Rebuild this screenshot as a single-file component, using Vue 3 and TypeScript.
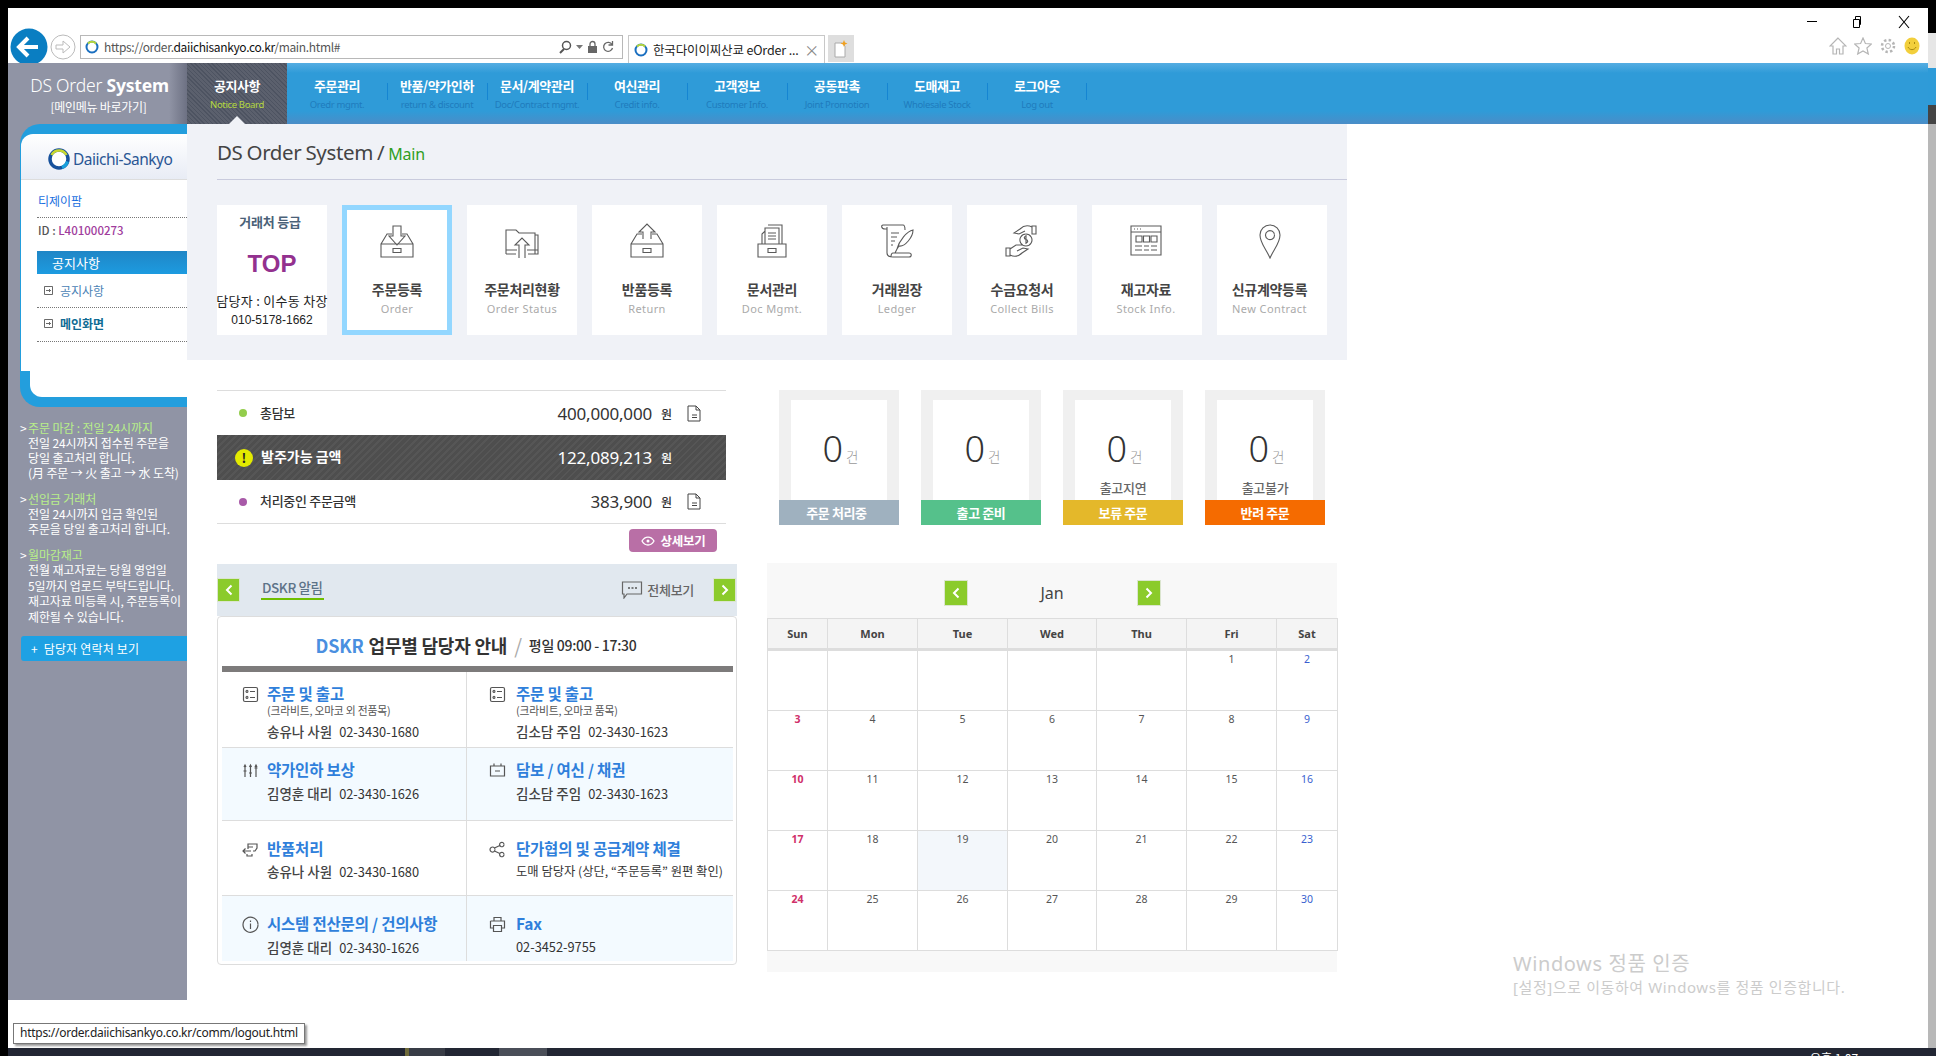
<template>
  <div class="screen">
    <div class="mid">
      <div class="window">
        <!-- browser chrome -->
        <header class="chrome">
          <div class="win-controls">
            <span class="min" />
            <svg class="ctl" width="14" height="14" viewBox="0 0 14 14"><path d="M3.500 4.500h6v8h-6zM5.500 4.500v-3h5v8h-1" fill="none" stroke="#000" /></svg>
            <svg class="ctl" width="14" height="14" viewBox="0 0 14 14"><path d="M2 1l10 12M12 1L2 13" fill="none" stroke="#000" stroke-width="1.1" /></svg>
          </div>
          <div class="toolbar">
            <svg class="back" width="38" height="38" viewBox="0 0 38 38">
              <circle cx="19" cy="19" r="18.5" fill="#0a7ec2" />
              <path d="M10 19h18M18 10l-9 9 9 9" fill="none" stroke="#fff" stroke-width="4" />
            </svg>
            <svg class="forward" width="26" height="26" viewBox="0 0 26 26">
              <circle cx="13" cy="13" r="12" fill="#fff" stroke="#bbb" />
              <path d="M6 11h7V7l7 6-7 6v-4H6z" fill="none" stroke="#bbb" />
            </svg>
            <div class="urlbar">
              <svg class="fav" width="14" height="14" viewBox="0 0 14 14">
                <circle cx="7" cy="7" r="5.5" fill="#fff" stroke="#1a6fc0" stroke-width="2" />
                <path d="M3 3.5a5.5 5.5 0 0 1 8 0" fill="none" stroke="#b5d63c" stroke-width="2" />
              </svg>
              <span class="url"><i>https://order.</i>daiichisankyo.co.kr<i>/main.html#</i></span>
              <span class="url-tools">
                <svg width="14" height="14" viewBox="0 0 14 14"><circle cx="8.5" cy="5.5" r="4" fill="none" stroke="#555" stroke-width="1.5" /><path d="M6 9l-4 4" stroke="#555" stroke-width="2" /></svg>
                <svg width="7" height="4" viewBox="0 0 7 4"><path d="M0 0h7L3.5 4z" fill="#777" /></svg>
                <svg width="11" height="14" viewBox="0 0 11 14"><path d="M3 6V4a2.5 2.5 0 0 1 5 0v2" fill="none" stroke="#666" stroke-width="1.3" /><rect x="1" y="6" width="9" height="7" fill="#666" /></svg>
                <svg width="12" height="14" viewBox="0 0 12 14"><path d="M10 4.5A4.5 4.5 0 1 0 10.5 8M10.500 1v4h-4" fill="none" stroke="#666" stroke-width="1.3" /></svg>
              </span>
            </div>
            <div class="tab">
              <svg width="14" height="14" viewBox="0 0 14 14">
                <circle cx="7" cy="7" r="5.5" fill="#fff" stroke="#1a6fc0" stroke-width="2" />
                <path d="M3 3.5a5.5 5.5 0 0 1 8 0" fill="none" stroke="#b5d63c" stroke-width="2" />
              </svg>
              <span class="tab-title">한국다이이찌산쿄 eOrder ...</span>
              <span class="tab-x">×</span>
            </div>
            <div class="newtab">
              <svg width="14" height="18" viewBox="0 0 14 18"><path d="M1 3h7l3 3v11H1z" fill="#fff" stroke="#aaa" /><path d="M10 0l1 2.500 2.500 1-2.500 1-1 2.500-1-2.500-2.500-1 2.500-1z" fill="#f0a020" /></svg>
            </div>
            <div class="ie-tools">
              <svg width="18" height="18" viewBox="0 0 18 18"><path d="M9 1L1 9h3v8h3.5v-5h3v5H14V9h3z" fill="none" stroke="#b5b5b5" stroke-width="1.2" /></svg>
              <svg width="18" height="18" viewBox="0 0 18 18"><path d="M9 1l2.400 5.500 6 .5-4.500 4 1.400 6L9 14l-5.300 3 1.400-6L.6 7l6-.5z" fill="none" stroke="#b5b5b5" stroke-width="1.2" /></svg>
              <svg width="18" height="18" viewBox="0 0 18 18"><circle cx="9" cy="9" r="2.5" fill="none" stroke="#b5b5b5" /><circle cx="9" cy="9" r="6" fill="none" stroke="#b5b5b5" stroke-width="2.5" stroke-dasharray="2.4 2.3" /></svg>
              <svg width="16" height="18" viewBox="0 0 16 18"><ellipse cx="8" cy="9" rx="7.5" ry="8.5" fill="#f2cf3c" /><path d="M4 10c1.500 3.500 6.500 3.500 8 0" fill="none" stroke="#a98a10" /><path d="M5.500 5v2M10.500 5v2" stroke="#a98a10" /></svg>
            </div>
          </div>
        </header>

        <div class="body">
          <!-- left sidebar -->
          <aside class="sidebar">
            <div class="side-head">
              <div class="brand">DS Order <b>System</b></div>
              <div class="brand-sub">[메인메뉴 바로가기]</div>
            </div>
            <div class="side-box">
              <div class="side-inner">
                <div class="logo">
                  <svg width="22" height="22" viewBox="0 0 22 22">
                    <circle cx="11" cy="11" r="9" fill="#fff" stroke="#17519c" stroke-width="3.5" />
                    <path d="M3.500 7a8.500 8.500 0 0 1 15 0" fill="none" stroke="#c9d92f" stroke-width="2.5" />
                    <path d="M14 19.500a9 9 0 0 0 5.500-6" fill="none" stroke="#19a1dc" stroke-width="3" />
                  </svg>
                  <span>Daiichi-Sankyo</span>
                </div>
                <div class="company">티제이팜</div>
                <div class="user-id">ID : <em>L401000273</em></div>
                <div class="menu-title">공지사항</div>
                <div class="menu-row">
                  <svg class="box-arrow" width="9" height="9" viewBox="0 0 9 9"><path d="M.5.5h8v8h-8zM2 4.500h4.500M5 3l1.500 1.500L5 6" fill="none" stroke="#444" stroke-width=".8" /></svg>
                  공지사항
                </div>
                <div class="menu-row strong">
                  <svg class="box-arrow" width="9" height="9" viewBox="0 0 9 9"><path d="M.5.5h8v8h-8zM2 4.500h4.500M5 3l1.500 1.500L5 6" fill="none" stroke="#444" stroke-width=".8" /></svg>
                  메인화면
                </div>
              </div>
            </div>
            <div class="notes">
              <div v-for="note in notes" :key="note.title" class="note">
                <div class="note-title"><span>&gt;</span>{{ note.title }}</div>
                <div v-for="line in note.lines" :key="line" class="note-line">{{ line }}</div>
              </div>
            </div>
            <div class="contact-btn">+&nbsp; 담당자 연락처 보기</div>
          </aside>

          <div class="main">
            <!-- top navigation -->
            <nav class="gnb">
              <a v-for="(item, i) in navItems" :key="item.ko" class="gnb-item" :class="{ active: i === 0 }">
                <strong>{{ item.ko }}</strong>
                <small>{{ item.en }}</small>
              </a>
            </nav>

            <section class="panel">
              <h1 class="page-title">DS Order System / <span>Main</span></h1>
              <div class="quick">
                <div class="q-card grade">
                  <div class="grade-label">거래처 등급</div>
                  <div class="grade-top">TOP</div>
                  <div class="grade-mgr">담당자 : 이수동 차장</div>
                  <div class="grade-tel">010-5178-1662</div>
                </div>
                <div v-for="(q, i) in quickCards" :key="q.ko" class="q-card" :class="{ selected: i === 0 }">
                  <svg class="q-icon" width="36" height="36" viewBox="0 0 36 36">
                    <path :d="q.icon" fill="none" stroke="#5a5a5a" stroke-width="1.1" />
                  </svg>
                  <div class="q-ko">{{ q.ko }}</div>
                  <div class="q-en">{{ q.en }}</div>
                </div>
              </div>
            </section>

            <div class="columns">
              <div class="col-left">
                <div class="summary">
                  <div class="sum-row">
                    <i class="dot green" />
                    <span class="sum-label">총담보</span>
                    <span class="sum-amount">400,000,000</span>
                    <span class="sum-unit">원</span>
                    <svg class="sum-doc" width="14" height="17" viewBox="0 0 14 17"><path d="M1 1h8l4 4v11H1zM9 1v4h4M5 10h5M5 12.500h5" fill="none" stroke="#444" /></svg>
                  </div>
                  <div class="sum-row dark">
                    <i class="warn">!</i>
                    <span class="sum-label">발주가능 금액</span>
                    <span class="sum-amount">122,089,213</span>
                    <span class="sum-unit">원</span>
                    <span class="sum-doc" />
                  </div>
                  <div class="sum-row last">
                    <i class="dot purple" />
                    <span class="sum-label">처리중인 주문금액</span>
                    <span class="sum-amount">383,900</span>
                    <span class="sum-unit">원</span>
                    <svg class="sum-doc" width="14" height="17" viewBox="0 0 14 17"><path d="M1 1h8l4 4v11H1zM9 1v4h4M5 10h5M5 12.500h5" fill="none" stroke="#444" /></svg>
                  </div>
                </div>
                <div class="detail-wrap">
                  <button class="detail-btn">
                    <svg width="14" height="10" viewBox="0 0 14 10"><path d="M1 5c3-5.300 9-5.300 12 0-3 5.300-9 5.300-12 0z" fill="none" stroke="#fff" stroke-width="1.3" /><circle cx="7" cy="5" r="1.5" fill="#fff" /></svg>
                    상세보기
                  </button>
                </div>

                <div class="notice-head">
                  <span class="sq-btn"><svg width="8" height="12" viewBox="0 0 8 12"><path d="M6.500 1.500L2 6l4.500 4.500" fill="none" stroke="#fff" stroke-width="2" /></svg></span>
                  <span class="notice-tab">DSKR 알림</span>
                  <span class="notice-all">
                    <svg width="22" height="18" viewBox="0 0 22 18"><path d="M1.500 1h19v12H6l-3 4v-4H1.500z" fill="none" stroke="#666" stroke-width="1.2" /><path d="M7 7h2M10.500 7h2M14 7h2" stroke="#555" stroke-width="1.3" /></svg>
                    전체보기
                  </span>
                  <span class="sq-btn"><svg width="8" height="12" viewBox="0 0 8 12"><path d="M1.500 1.500L6 6l-4.500 4.500" fill="none" stroke="#fff" stroke-width="2" /></svg></span>
                </div>

                <div class="notice-box">
                  <div class="notice-title">
                    <b class="blue">DSKR</b>
                    <b>업무별 담당자 안내</b>
                    <span class="slash">/</span>
                    <span class="hours">평일 09:00 - 17:30</span>
                  </div>
                  <div class="contacts">
                    <div v-for="c in contacts" :key="c.title + c.person" class="contact" :class="'r' + c.row">
                      <svg class="c-icon" width="17" height="17" viewBox="0 0 17 17">
                        <path :d="c.icon" fill="none" stroke="#555" stroke-width="1.2" />
                      </svg>
                      <div>
                        <div class="c-title">{{ c.title }}</div>
                        <div v-if="c.sub" class="c-sub">{{ c.sub }}</div>
                        <div class="c-person" :class="{ long: c.tel.length > 15 }"><b v-if="c.person">{{ c.person }}</b><span>{{ c.tel }}</span></div>
                      </div>
                    </div>
                  </div>
                </div>
              </div>

              <div class="col-right">
                <div class="status-row">
                  <div v-for="s in statuses" :key="s.label" class="status">
                    <div class="status-body">
                      <div class="count">0<small>건</small></div>
                      <div class="status-note">{{ s.note }}</div>
                    </div>
                    <div class="status-label" :class="s.cls">{{ s.label }}</div>
                  </div>
                </div>

                <div class="calendar">
                  <div class="cal-head">
                    <span class="sq-btn cal-btn"><svg width="8" height="12" viewBox="0 0 8 12"><path d="M6.500 1.500L2 6l4.500 4.500" fill="none" stroke="#fff" stroke-width="2" /></svg></span>
                    <span class="cal-month">Jan</span>
                    <span class="sq-btn cal-btn"><svg width="8" height="12" viewBox="0 0 8 12"><path d="M1.500 1.500L6 6l-4.500 4.500" fill="none" stroke="#fff" stroke-width="2" /></svg></span>
                  </div>
                  <table class="cal-table">
                    <colgroup>
                      <col v-for="(w, i) in colWidths" :key="i" :width="w" />
                    </colgroup>
                    <thead>
                      <tr><th v-for="d in weekDays" :key="d">{{ d }}</th></tr>
                    </thead>
                    <tbody>
                      <tr v-for="(week, wi) in weeks" :key="wi">
                        <td v-for="(day, di) in week" :key="di" :class="{ sun: di === 0, sat: di === 6, today: day === 19 }">{{ day }}</td>
                      </tr>
                    </tbody>
                  </table>
                </div>
              </div>
            </div>
          </div>
        </div>
      </div>
      <div class="right-strip">
        <i class="s1" /><i class="s2" /><i class="s3" /><i class="s4" /><i class="s5" />
      </div>
    </div>
    <footer class="taskbar">
      <i class="t-mark" /><i class="t-a" /><i class="t-b" />
      <span class="t-clock">오후 1:07</span>
    </footer>

    <!-- overlays on top of the page -->
    <div class="status-tip">https://order.daiichisankyo.co.kr/comm/logout.html</div>
    <div class="watermark">
      <div class="wm1">Windows 정품 인증</div>
      <div class="wm2">[설정]으로 이동하여 Windows를 정품 인증합니다.</div>
    </div>
  </div>
</template>

<script setup lang="ts">
interface Contact {
  row: number;
  title: string;
  sub?: string;
  person: string;
  tel: string;
  icon: string;
}

const navItems = [
  { ko: '공지사항', en: 'Notice Board' },
  { ko: '주문관리', en: 'Oredr mgmt.' },
  { ko: '반품/약가인하', en: 'return & discount' },
  { ko: '문서/계약관리', en: 'Doc/Contract mgmt.' },
  { ko: '여신관리', en: 'Credit info.' },
  { ko: '고객정보', en: 'Customer Info.' },
  { ko: '공동판촉', en: 'Joint Promotion' },
  { ko: '도매재고', en: 'Wholesale Stock' },
  { ko: '로그아웃', en: 'Log out' },
];

const notes = [
  {
    title: '주문 마감 : 전일 24시까지',
    lines: ['전일 24시까지 접수된 주문을', '당일 출고처리 합니다.', '(月 주문 → 火 출고 → 水 도착)'],
  },
  { title: '선입금 거래처', lines: ['전일 24시까지 입금 확인된', '주문을 당일 출고처리 합니다.'] },
  {
    title: '월마감재고',
    lines: ['전월 재고자료는 당월 영업일', '5일까지 업로드 부탁드립니다.', '재고자료 미등록 시, 주문등록이', '제한될 수 있습니다.'],
  },
];

const drawer = 'M2 21H34V34H2ZM14 25.500H22V29.500H14Z';

const quickCards = [
  { ko: '주문등록', en: 'Order', icon: `${drawer}M2 21L8 11H13M34 21L28 11H23M14 3H22V13H26L18 22L10 13H14Z` },
  {
    ko: '주문처리현황',
    en: 'Order Status',
    icon: 'M2 31V7H12L15 10H31V31H24M2 31H12M31 12H34V31H31M2 27H13M23 27H34M15 35V22H11L18 15L25 22H21V35',
  },
  { ko: '반품등록', en: 'Return', icon: `${drawer}M2 21L8 11H13M34 21L28 11H23M14 16V9H10L18 1L26 9H22V16` },
  {
    ko: '문서관리',
    en: 'Doc Mgmt.',
    icon: 'M4 21H32V34H4ZM14 25.500H22V29.500H14ZM8 21V11L11 8V21M11 8V5H25V21M14 2H28V21M14 10H22M14 13H22M14 16H22',
  },
  {
    ko: '거래원장',
    en: 'Ledger',
    icon: 'M4 2H24C26 2 26 5 26 7M4 2C2 2 2 6 6 6H8M8 4V30C8 34 12 34 14 34H30C33 34 33 30 30 30H14C12 30 12 34 12 34M12 10H20M12 14H18M12 18H16M12 22H14M18 26C20 18 28 8 34 7C34 14 26 24 20 23ZM18 26L16 30',
  },
  {
    ko: '수금요청서',
    en: 'Collect Bills',
    icon: 'M32 3H28V11H32ZM28 4C24 2 20 2 16 6L10 10L15 11L21 8M2 25H6V33H2ZM6 32C10 34 14 34 18 30L24 26L19 25L13 28M6 26L12 22H18M22 11A6 6 0 1 1 21.900 11M22 13.500C20 13 19.500 16 22 16.500C24.500 17 24 20 22 19.500M22 12V21',
  },
  {
    ko: '재고자료',
    en: 'Stock Info.',
    icon: 'M3 3H33V32H3ZM3 9H33M6 6H7M9 6H10M12 6H13M8 13H14V19H8ZM15.500 13H21.500V19H15.500ZM23 13H29V19H23ZM7 23H14M16 23H21M23 23H29M7 27H14M16 27H21M23 27H29',
  },
  {
    ko: '신규계약등록',
    en: 'New Contract',
    icon: 'M18 35C14 26 8 20 8 12A10 10 0 0 1 28 12C28 20 22 26 18 35ZM22.500 12A4.500 4.500 0 1 1 22.490 11.800',
  },
];

const listIcon =
  'M3 1.500H14C15 1.500 15.500 2 15.500 3V14C15.500 15 15 15.500 14 15.500H3C2 15.500 1.500 15 1.500 14V3C1.500 2 2 1.500 3 1.500ZM6 5.500A1 1 0 1 1 5.990 5.300M8 5.500H13M6 11.500A1 1 0 1 1 5.990 11.300M8 11.500H13';

const contacts: Contact[] = [
  { row: 1, title: '주문 및 출고', sub: '(크라비트, 오마코 외 전품목)', person: '송유나 사원', tel: '02-3430-1680', icon: listIcon },
  { row: 1, title: '주문 및 출고', sub: '(크라비트, 오마코 품목)', person: '김소담 주임', tel: '02-3430-1623', icon: listIcon },
  {
    row: 2,
    title: '약가인하 보상',
    person: '김영훈 대리',
    tel: '02-3430-1626',
    icon: 'M3 3V15M1.500 9H4.500M8.500 3V15M7 11H10M14 3V15M12.500 6H15.500M2 5L3 3L4 5M7.500 5L8.500 3L9.500 5M13 5L14 3L15 5',
  },
  {
    row: 2,
    title: '담보 / 여신 / 채권',
    person: '김소담 주임',
    tel: '02-3430-1623',
    icon: 'M1.500 4H15.500V14H1.500ZM5 1.500V4M12 1.500V4M6 9H11',
  },
  {
    row: 3,
    title: '반품처리',
    person: '송유나 사원',
    tel: '02-3430-1680',
    icon: 'M6 8V3H15V7L13 10H11M11 6H6M1 10H9M3.500 7.500L1 10L3.500 12.500M5 13V15H10V13',
  },
  {
    row: 3,
    title: '단가협의 및 공급계약 체결',
    person: '',
    tel: '도매 담당자 (상단, “주문등록” 원편 확인)',
    icon: 'M6 8.500A2.500 2.500 0 1 1 5.990 8.300M15 3.500A2.200 2.200 0 1 1 14.990 3.300M15 13.500A2.200 2.200 0 1 1 14.990 13.300M5.500 7L10.800 4.500M5.500 10L10.800 12.500',
  },
  {
    row: 4,
    title: '시스템 전산문의 / 건의사항',
    person: '김영훈 대리',
    tel: '02-3430-1626',
    icon: 'M16 8.500A7.500 7.500 0 1 1 15.990 8.300M8.500 7.500V13M8.500 4.500V6',
  },
  {
    row: 4,
    title: 'Fax',
    person: '',
    tel: '02-3452-9755',
    icon: 'M5 5V1.500H12V5M1.500 5H15.500V12H12.500M4.500 12H1.500V5M4.500 9.500H12.500V15.500H4.500Z',
  },
];

const statuses = [
  { label: '주문 처리중', note: '', cls: 'gray' },
  { label: '출고 준비', note: '', cls: 'green' },
  { label: '보류 주문', note: '출고지연', cls: 'yellow' },
  { label: '반려 주문', note: '출고불가', cls: 'orange' },
];

const colWidths = [60, 90, 90, 89, 90, 90, 61];
const weekDays = ['Sun', 'Mon', 'Tue', 'Wed', 'Thu', 'Fri', 'Sat'];

const weeks: (number | string)[][] = [
  ['', '', '', '', '', 1, 2],
  [3, 4, 5, 6, 7, 8, 9],
  [10, 11, 12, 13, 14, 15, 16],
  [17, 18, 19, 20, 21, 22, 23],
  [24, 25, 26, 27, 28, 29, 30],
];
</script>

<style>
html,
body {
  margin: 0;
  background: #000;
}
</style>

<style scoped>
.screen {
  position: relative;
  width: 1936px;
  height: 1056px;
  padding-top: 8px;
  box-sizing: border-box;
  background: #000;
  overflow: hidden;
  font-family: "Noto Sans CJK KR", "Noto Sans", sans-serif;
  color: #333;
}

.mid {
  display: flex;
  height: 1040px;
  padding-left: 8px;
}

.window {
  width: 1920px;
  height: 1040px;
  background: #fff;
  display: flex;
  flex-direction: column;
}

.right-strip {
  width: 8px;
  margin-top: -8px;
  display: flex;
  flex-direction: column;
}

.right-strip i {
  display: block;
}

.s1 { height: 33px; background: #000; }
.s2 { height: 35px; background: #e6e6e6; }
.s3 { height: 37px; background: #2e9bd8; }
.s4 { height: 19px; background: #444; }
.s5 { flex: 1; background: #b8b8b8; }

/* browser chrome */
.chrome {
  height: 55px;
  flex-shrink: 0;
}

.win-controls {
  height: 27px;
  display: flex;
  justify-content: flex-end;
  align-items: center;
  padding-right: 17px;
  gap: 33px;
  box-sizing: border-box;
}

.min {
  width: 10px;
  height: 1px;
  background: #000;
}

.toolbar {
  height: 28px;
  display: flex;
  align-items: flex-start;
  padding-left: 2px;
}

.back {
  margin-top: -7px;
  flex-shrink: 0;
}

.forward {
  margin: -1px 0 0 2px;
  flex-shrink: 0;
}

.urlbar {
  width: 543px;
  height: 24px;
  margin-left: 4px;
  box-sizing: border-box;
  border: 1px solid #b8b8b8;
  display: flex;
  align-items: center;
  padding: 0 8px 0 4px;
  font-size: 12px;
  letter-spacing: -0.35px;
}

.fav {
  margin-right: 5px;
}

.url {
  flex: 1;
  color: #111;
  margin-top: -1px;
}

.url i {
  font-style: normal;
  color: #555;
}

.url-tools {
  display: flex;
  align-items: center;
  gap: 4px;
}

.tab {
  width: 197px;
  height: 28px;
  margin-left: 5px;
  box-sizing: border-box;
  border: 1px solid #c8c8c8;
  border-bottom: 0;
  display: flex;
  align-items: center;
  padding: 0 5px;
  gap: 5px;
  font-size: 12.5px;
  letter-spacing: -0.15px;
}

.tab-title {
  flex: 1;
  white-space: nowrap;
  color: #222;
}

.tab-x {
  color: #888;
  font-size: 15px;
}

.newtab {
  width: 26px;
  height: 27px;
  margin-left: 3px;
  background: #dedede;
  display: flex;
  align-items: center;
  justify-content: center;
}

.ie-tools {
  margin-left: auto;
  margin-right: 8px;
  display: flex;
  align-items: center;
  gap: 7px;
  height: 22px;
}

.body {
  flex: 1;
  display: flex;
  min-height: 0;
}

/* sidebar */
.sidebar {
  width: 179px;
  height: 937px;
  flex-shrink: 0;
  background: #9094a5;
  display: flex;
  flex-direction: column;
  color: #fff;
}

.side-head {
  height: 61px;
  box-sizing: border-box;
  padding-top: 10px;
  text-align: center;
  background: linear-gradient(90deg, #9094a5 90%, #6d7183);
}

.brand {
  font-family: "Noto Sans", sans-serif;
  font-size: 17.5px;
  line-height: 24px;
  letter-spacing: -0.2px;
  font-weight: 300;
  padding-left: 4px;
}

.brand b {
  font-weight: 700;
}

.brand-sub {
  font-size: 12px;
  line-height: 18px;
  margin-top: 1px;
  letter-spacing: -0.3px;
  padding-left: 2px;
}

.side-box {
  position: relative;
  height: 283px;
  margin-left: 12px;
  box-sizing: border-box;
  padding: 10px 0 10px 10px;
  background: #239edd;
  border-radius: 20px 0 0 20px;
}

.side-box::before {
  content: "";
  position: absolute;
  left: 1px;
  top: 31px;
  bottom: 36px;
  width: 10px;
  background: #fff;
}

.side-inner {
  position: relative;
  height: 263px;
  background: #fff;
  border-radius: 12px 0 0 12px;
  color: #333;
}

.logo {
  height: 46px;
  box-sizing: border-box;
  border-bottom: 1px solid #ddd;
  margin-left: -9px;
  padding: 4px 0 0 27px;
  border-top-left-radius: 12px;
  background: linear-gradient(#fff, #e8ecf5);
  display: flex;
  align-items: center;
  gap: 3px;
  font-family: "Noto Sans", sans-serif;
  font-size: 15.5px;
  letter-spacing: -0.5px;
  color: #2a5694;
}

.company {
  margin-left: 7px;
  height: 38px;
  line-height: 42px;
  box-sizing: border-box;
  font-size: 12px;
  color: #1a6fe0;
  border-bottom: 1px dotted #777;
  padding-left: 1px;
}

.user-id {
  margin-left: 8px;
  height: 33px;
  line-height: 25px;
  font-size: 11.5px;
  font-weight: 500;
  color: #555;
}

.user-id em {
  font-style: normal;
  color: #a03c9c;
}

.menu-title {
  margin-left: 7px;
  height: 23px;
  line-height: 23px;
  font-size: 13px;
  padding-left: 15px;
  color: #fff;
  background: linear-gradient(#1f86c6, #1d9be0);
}

.menu-row {
  margin-left: 7px;
  height: 34px;
  box-sizing: border-box;
  border-bottom: 1px dotted #777;
  padding-left: 7px;
  display: flex;
  align-items: center;
  gap: 7px;
  font-size: 12px;
  color: #4a82b5;
}

.menu-row.strong {
  font-weight: 700;
  color: #0f6b94;
  padding-bottom: 2px;
}

.notes {
  padding: 13px 0 0 20px;
  font-size: 12px;
  line-height: 15px;
  letter-spacing: -0.12px;
  white-space: nowrap;
}

.note {
  margin-bottom: 11px;
}

.note:nth-child(3) .note-line {
  line-height: 15.5px;
}

.note-title {
  position: relative;
  color: #b9ef8a;
}

.note-title span {
  position: absolute;
  left: -8px;
  color: #fff;
}

.contact-btn {
  margin: 1px 0 0 13px;
  height: 25px;
  line-height: 25px;
  padding-left: 10px;
  font-size: 12px;
  letter-spacing: 0.2px;
  background: #1ea1e3;
  border-radius: 3px 0 0 3px;
}

/* main */
.main {
  flex: 1;
  min-width: 0;
}

.gnb {
  position: relative;
  height: 61px;
  display: flex;
  background: linear-gradient(#55ade2 0, #2f9bd8 10px, #2f9bd8 48px, #4a8dc7 100%);
}

.gnb-item {
  width: 100px;
  height: 61px;
  box-sizing: border-box;
  padding-top: 13px;
  display: flex;
  flex-direction: column;
  align-items: center;
  position: relative;
}

.gnb-item strong {
  font-size: 13px;
  line-height: 20px;
  font-weight: 700;
  letter-spacing: -0.4px;
  color: #fff;
}

.gnb-item small {
  font-family: "Noto Sans", sans-serif;
  font-size: 9.5px;
  line-height: 14px;
  margin-top: 2px;
  letter-spacing: -0.35px;
  color: #1f7cbd;
  white-space: nowrap;
}

.gnb-item:not(.active):not(:nth-child(2))::before,
.gnb-item:last-child::after {
  content: "";
  position: absolute;
  top: 20px;
  height: 17px;
  width: 1px;
  background: #1585d2;
}

.gnb-item:not(.active):not(:nth-child(2))::before {
  left: 0;
}

.gnb-item:last-child::after {
  right: 0;
}

.gnb-item.active {
  background: repeating-linear-gradient(45deg, #4d5361 0 1px, #5b606d 1px 3px);
}

.gnb-item.active small {
  color: #b6d93f;
}

.gnb-item.active::after {
  content: "";
  position: absolute;
  left: 42px;
  bottom: 0;
  border: 8px solid transparent;
  border-top: 0;
  border-bottom-color: #f0f2f7;
}

.panel {
  width: 1160px;
  height: 236px;
  background: #f0f2f7;
  overflow: hidden;
}

.page-title {
  margin: 0 0 0 30px;
  height: 56px;
  box-sizing: border-box;
  border-bottom: 1px solid #c9cbdd;
  font-family: "Noto Sans", sans-serif;
  font-size: 20.5px;
  line-height: 57px;
  font-weight: 400;
  letter-spacing: -0.35px;
  word-spacing: -1px;
  color: #444;
}

.page-title span {
  font-size: 16px;
  letter-spacing: -0.2px;
  color: #2f9e1e;
}

.quick {
  display: grid;
  grid-template-columns: repeat(9, 110px);
  column-gap: 15px;
  margin: 25px 0 0 30px;
}

.q-card {
  height: 130px;
  box-sizing: border-box;
  background: #fff;
  display: flex;
  flex-direction: column;
  align-items: center;
  padding-top: 18px;
}

.q-card.selected {
  box-shadow: inset 0 0 0 5px #93d7ff;
}

.q-card:nth-child(8) {
  padding-right: 2px;
}

.q-card:nth-child(9) {
  padding-right: 5px;
}

.q-icon {
  flex-shrink: 0;
}

.q-ko {
  margin-top: 20px;
  font-size: 14px;
  line-height: 20px;
  font-weight: 700;
  letter-spacing: -0.3px;
  color: #444;
}

.q-en {
  font-family: "Noto Sans", sans-serif;
  margin-top: 1px;
  font-size: 11px;
  line-height: 18px;
  letter-spacing: 0.4px;
  color: #aaa;
}

.grade {
  padding-top: 8px;
  white-space: nowrap;
}

.grade-label {
  font-size: 13px;
  line-height: 18px;
  font-weight: 700;
  letter-spacing: -0.2px;
  color: #4a6178;
  padding-right: 4px;
}

.grade-top {
  font-family: "Liberation Sans", sans-serif;
  margin-top: 18px;
  font-size: 24px;
  line-height: 30px;
  font-weight: 700;
  color: #93318f;
}

.grade-mgr {
  margin-top: 13px;
  font-size: 13px;
  line-height: 18px;
  letter-spacing: 0.3px;
  color: #222;
}

.grade-tel {
  font-family: "Liberation Sans", sans-serif;
  margin-top: 1px;
  font-size: 12px;
  line-height: 18px;
  color: #222;
}

.columns {
  display: flex;
  padding: 30px 0 0 30px;
}

.col-left {
  width: 520px;
}

/* amounts */
.summary {
  width: 509px;
  border-top: 1px solid #ddd;
  border-bottom: 1px solid #ddd;
}

.sum-row {
  display: flex;
  align-items: center;
  height: 44px;
  padding: 0 25px 0 22px;
  box-sizing: border-box;
  color: #333;
}

.sum-row.last {
  height: 43px;
}

.sum-row.dark {
  height: 45px;
  color: #fff;
  background: repeating-linear-gradient(135deg, #4e4e4e 0 3px, #565656 3px 5px);
}

.dot {
  width: 8px;
  height: 8px;
  border-radius: 50%;
  margin-right: 13px;
}

.dot.green { background: #93cd4c; }
.dot.purple { background: #a85aa8; }

.warn {
  width: 18px;
  height: 18px;
  margin: 0 8px 0 -4px;
  border-radius: 50%;
  background: #e3ea00;
  color: #222;
  font-style: normal;
  font-weight: 700;
  font-size: 13px;
  line-height: 18px;
  text-align: center;
}

.sum-label {
  flex: 1;
  font-size: 13px;
  font-weight: 500;
  letter-spacing: -0.3px;
  margin-top: -2px;
}

.dark .sum-label {
  font-size: 14px;
  font-weight: 700;
  letter-spacing: 0;
  margin-top: -4px;
}

.sum-amount {
  font-family: "Noto Sans", sans-serif;
  font-size: 17px;
  letter-spacing: -0.2px;
}

.sum-unit {
  margin-left: 9px;
  font-size: 12px;
  font-weight: 500;
}

.sum-doc {
  width: 14px;
  margin-left: 15px;
}

.detail-wrap {
  width: 500px;
  height: 40px;
  padding-top: 5px;
  box-sizing: border-box;
  display: flex;
  justify-content: flex-end;
}

.detail-btn {
  width: 88px;
  height: 23px;
  border: 0;
  padding: 0;
  border-radius: 4px;
  background: #b96fa6;
  color: #fff;
  font: 700 12.5px "Noto Sans CJK KR", sans-serif;
  letter-spacing: -0.3px;
  display: flex;
  align-items: center;
  justify-content: center;
  gap: 6px;
}

.notice-head {
  height: 52px;
  background: #e1e8ef;
  display: flex;
  align-items: center;
  padding: 0 2px 1px 1px;
  box-sizing: border-box;
}

.sq-btn {
  width: 21px;
  height: 22px;
  margin-top: 1px;
  background: #8bcb2b;
  box-shadow: 0 0 0 1px #dbe5cf;
  display: flex;
  align-items: center;
  justify-content: center;
}

.notice-tab {
  margin: -1px 0 0 22px;
  padding: 0 1px 1px;
  border-bottom: 2px solid #6fbf00;
  font-size: 13.5px;
  line-height: 19px;
  letter-spacing: -0.4px;
  color: #5d7388;
  font-weight: 500;
}

.notice-all {
  margin-left: auto;
  margin-right: 20px;
  display: flex;
  align-items: center;
  gap: 4px;
  font-size: 13px;
  font-weight: 500;
  letter-spacing: -0.3px;
  color: #666;
}

.notice-box {
  height: 349px;
  box-sizing: border-box;
  border: 1px solid #ddd;
  border-radius: 4px;
  padding: 0 3px 3px 4px;
}

.notice-title {
  height: 42px;
  padding: 7px 3px 0 0;
  border-bottom: 6px solid #7d7b7b;
  display: flex;
  align-items: center;
  justify-content: center;
  gap: 5px;
  font-size: 18px;
  letter-spacing: -0.2px;
  color: #333;
}

.notice-title .blue {
  color: #4a8fe0;
}

.slash {
  color: #aaa;
  font-size: 20px;
  margin: 0 2px;
}

.hours {
  font-size: 14px;
  font-weight: 500;
  letter-spacing: -0.3px;
}

.contacts {
  display: grid;
  grid-template-columns: 244px 267px;
  grid-template-rows: 76px 73px 75px 65px;
}

.contact {
  display: flex;
  align-items: flex-start;
  box-sizing: border-box;
  padding-left: 20px;
  border-bottom: 1px solid #ddd;
}

.contact:nth-child(even) {
  border-left: 1px solid #ddd;
  padding-left: 22px;
}

.contact.r2,
.contact.r4 {
  background: #f3faff;
}

.contact.r4 {
  border-bottom: 0;
}

.contact.r1 { padding-top: 11px; }
.contact.r2 { padding-top: 11px; }
.contact.r3 { padding-top: 17px; }
.contact.r4 { padding-top: 17px; }

.c-icon {
  width: 17px;
  height: 17px;
  margin: 3px 8px 0 0;
  flex-shrink: 0;
}

.contact:nth-child(even) .c-icon {
  margin-right: 10px;
}

.c-title {
  font-size: 15.5px;
  line-height: 20px;
  font-weight: 700;
  letter-spacing: -0.2px;
  color: #2f7fdb;
}

.c-sub {
  font-size: 10.8px;
  line-height: 14px;
  letter-spacing: -0.2px;
  color: #555;
}

.c-person {
  font-size: 12.8px;
  line-height: 18px;
  color: #333;
  white-space: nowrap;
}

.r1 .c-person { margin-top: 5px; }
.r2 .c-person { margin-top: 5px; }
.r3 .c-person { margin-top: 4px; }
.r4 .c-person { margin-top: 5px; }

.c-person.long {
  font-size: 12.3px;
}

.c-person b {
  font-weight: 500;
  font-size: 13.5px;
  color: #444;
  margin-right: 7px;
}

/* order status cards */
.col-right {
  width: 570px;
  margin-left: 30px;
}

.status-row {
  display: grid;
  grid-template-columns: repeat(4, 120px);
  column-gap: 22px;
  margin-left: 12px;
}

.status {
  background: #f0f0f0;
  padding-top: 10px;
}

.status-body {
  height: 100px;
  margin: 0 12px;
  box-sizing: border-box;
  background: #fff;
  text-align: center;
  padding-top: 26px;
}

.count {
  font-family: "Noto Sans", sans-serif;
  font-size: 36px;
  line-height: 46px;
  font-weight: 300;
  color: #333;
  padding-left: 3px;
}

.count small {
  font-family: "Noto Sans CJK KR", sans-serif;
  font-size: 13.5px;
  font-weight: 300;
  color: #999;
  margin-left: 3px;
  vertical-align: 0;
}

.status-note {
  font-size: 13px;
  line-height: 18px;
  font-weight: 500;
  letter-spacing: -0.3px;
  color: #666;
}

.status-label {
  height: 25px;
  line-height: 25px;
  text-align: center;
  font-size: 13px;
  font-weight: 700;
  letter-spacing: -0.4px;
  color: #fff;
}

.status-label.gray { background: #9fb1bf; padding-right: 5px; }
.status-label.green { background: #55c18b; }
.status-label.yellow { background: #e4b82a; }
.status-label.orange { background: #f56b00; }

/* calendar */
.calendar {
  margin-top: 38px;
  height: 409px;
  background: #f8f8f8;
}

.cal-head {
  height: 55px;
  box-sizing: border-box;
  padding: 18px 0 0 0;
  display: flex;
  align-items: flex-start;
  justify-content: center;
}

.cal-btn {
  width: 22px;
  height: 24px;
  margin: 0;
}

.cal-month {
  width: 171px;
  text-align: center;
  font-family: "Noto Sans", sans-serif;
  font-size: 16px;
  line-height: 24px;
  color: #444;
}

.cal-table {
  width: 570px;
  border-collapse: collapse;
  table-layout: fixed;
  background: #fff;
}

.cal-table th {
  height: 29px;
  padding: 0;
  background: #f4f4f4;
  border: 1px solid #ddd;
  border-bottom: 3px solid #ddd;
  font-family: "Noto Sans", sans-serif;
  font-size: 11px;
  font-weight: 700;
  color: #444;
}

.cal-table td {
  height: 58px;
  padding: 1px 0 0;
  border: 1px solid #ddd;
  vertical-align: top;
  text-align: center;
  font-family: "Noto Sans", sans-serif;
  font-size: 10.5px;
  line-height: 14px;
  color: #555;
}

.cal-table td.sun {
  color: #d0306a;
  font-weight: 700;
}

.cal-table td.sat {
  color: #3a5fd0;
}

.cal-table td.today {
  background: #f3f7fb;
}

/* taskbar */
.taskbar {
  position: relative;
  height: 8px;
  margin-left: 8px;
  background: #222633;
  overflow: hidden;
}

.taskbar i {
  position: absolute;
  top: 0;
  bottom: 0;
}

.t-mark { left: 397px; width: 4px; background: #6e6a3a; }
.t-a { left: 401px; width: 36px; background: #383c46; }
.t-b { left: 491px; width: 48px; background: #4a4e58; }

.t-clock {
  position: absolute;
  left: 1802px;
  top: 2px;
  font-size: 12px;
  line-height: 16px;
  color: #fff;
}

/* overlays */
.status-tip {
  position: absolute;
  left: 13px;
  top: 1023px;
  width: 292px;
  height: 21px;
  box-sizing: border-box;
  border: 1px solid #777;
  background: #fff;
  box-shadow: 2px 2px 2px rgba(0, 0, 0, 0.4);
  padding-left: 6px;
  font-family: "Noto Sans", sans-serif;
  font-size: 12px;
  line-height: 18px;
  letter-spacing: -0.27px;
  color: #222;
  white-space: nowrap;
}

.watermark {
  position: absolute;
  left: 1513px;
  top: 950px;
  color: #ccc;
  white-space: nowrap;
  font-family: "Noto Sans", "Noto Sans CJK KR", sans-serif;
}

.wm1 {
  font-size: 20px;
  line-height: 28px;
  letter-spacing: 0.6px;
}

.wm2 {
  font-size: 15px;
  line-height: 18px;
  letter-spacing: 0.6px;
}
</style>
